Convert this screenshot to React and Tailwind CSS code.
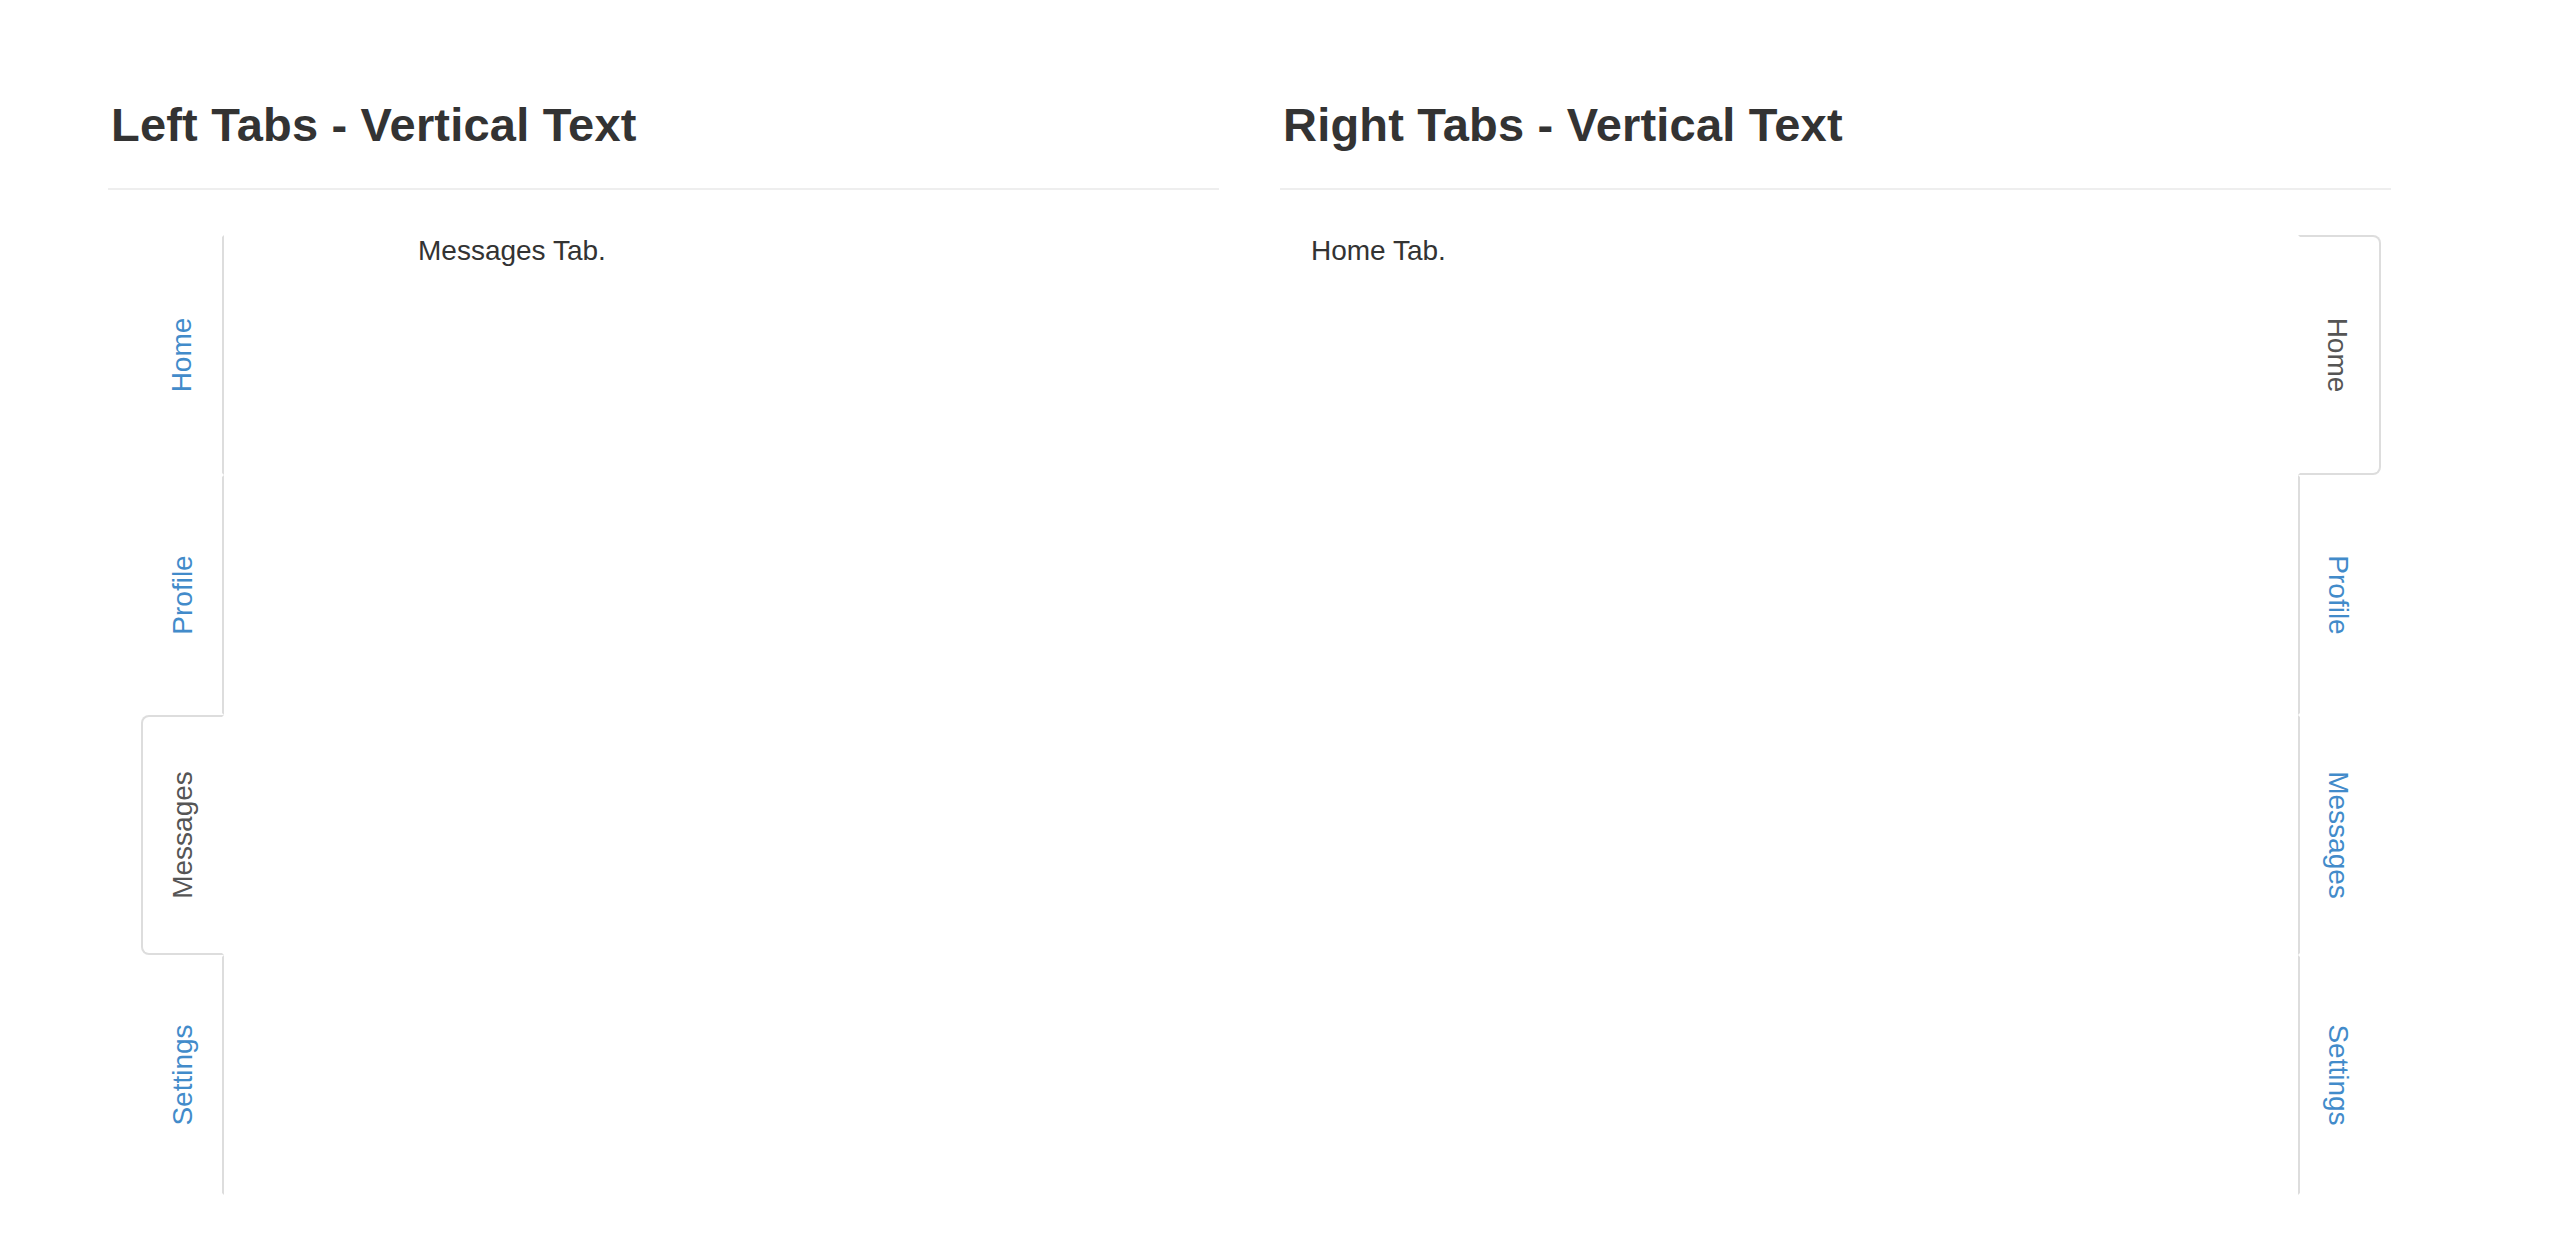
import React, { useState } from 'react';

const TABS = ['Home', 'Profile', 'Messages', 'Settings'];

function TabButton({ label, active, side, onClick }) {
  // inner edge carries the line; active tab opens toward the content
  const base = 'flex items-center justify-center w-[83px] h-[240px] border-2 cursor-pointer';
  const style =
    side === 'left'
      ? active
        ? 'border-[#ddd] border-r-transparent rounded-l-[8px] text-[#555] bg-white'
        : 'border-transparent border-r-[#ddd] text-[#428bca]'
      : active
        ? 'border-[#ddd] border-l-transparent rounded-r-[8px] text-[#555] bg-white'
        : 'border-transparent border-l-[#ddd] text-[#428bca]';

  return (
    <div className={`${base} ${style}`} onClick={onClick}>
      <span className={`inline-block whitespace-nowrap text-[28px] leading-[40px] ${side === 'left' ? '-rotate-90' : 'rotate-90 mr-[4px]'}`}>
        {label}
      </span>
    </div>
  );
}

function TabPanel({ title, side, initial }) {
  const [active, setActive] = useState(initial);

  const tabs = (
    <div className={`flex flex-col ${side === 'left' ? 'pl-[33px]' : 'pr-[10px]'}`}>
      {TABS.map(t => (
        <TabButton key={t} label={t} side={side} active={t === active} onClick={() => setActive(t)} />
      ))}
    </div>
  );

  const content = (
    <div className={`flex-1 ${side === 'left' ? 'pl-[194px]' : 'pl-[31px]'}`}>
      <p className="text-[28px] leading-[32px] text-[#333]">{active} Tab.</p>
    </div>
  );

  return (
    <div className="w-[1111px]">
      <div className="pt-[99px] pb-[37px] border-b-2 border-[#eee]">
        <h3 className="text-[47px] leading-[52px] font-bold text-[#333] pl-[3px] tracking-[0.2px]">{title}</h3>
      </div>
      <div className="flex mt-[45px]">
        {side === 'left' ? (
          <>
            {tabs}
            {content}
          </>
        ) : (
          <>
            {content}
            {tabs}
          </>
        )}
      </div>
    </div>
  );
}

export default function App() {
  return (
    <div className="min-h-[1258px] bg-white font-['Liberation_Sans',Arial,sans-serif]">
      <div className="flex gap-[61px] pl-[108px]">
        <TabPanel title="Left Tabs - Vertical Text" side="left" initial="Messages" />
        <TabPanel title="Right Tabs - Vertical Text" side="right" initial="Home" />
      </div>
    </div>
  );
}
